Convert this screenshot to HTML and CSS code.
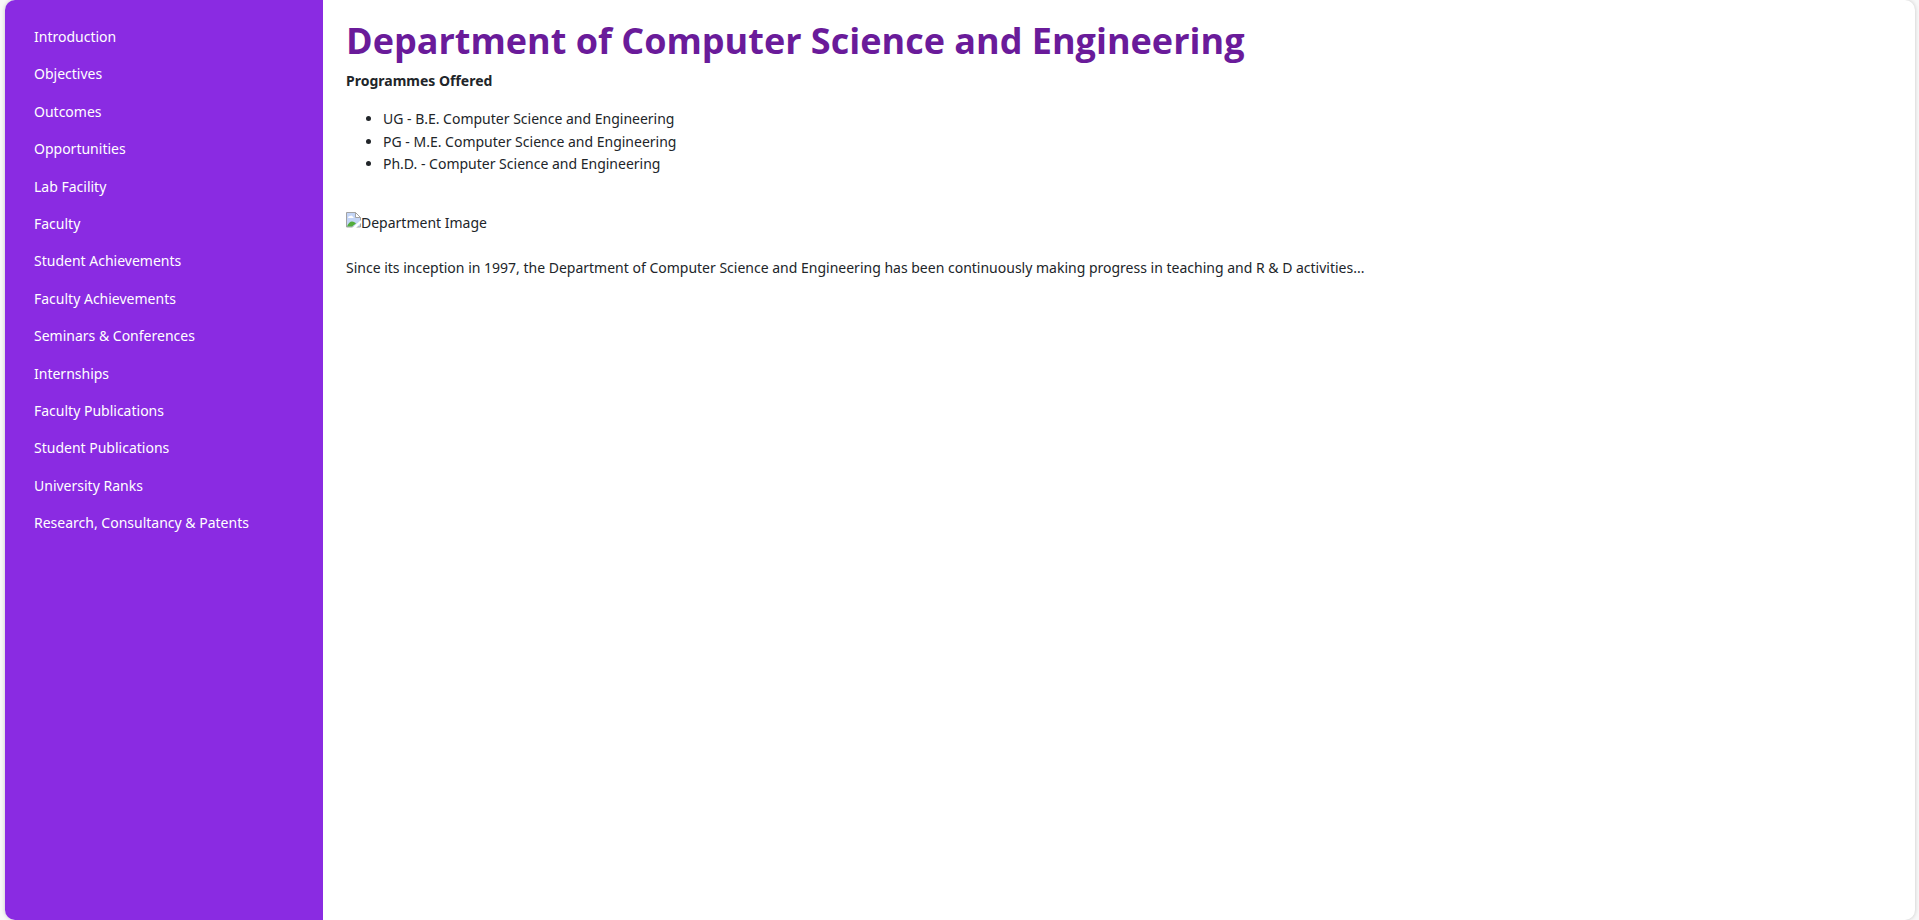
FILE: index.html
```html
<!DOCTYPE html>
<html lang="en">
<head>
<meta charset="utf-8">
<title>Department of Computer Science and Engineering</title>
<link rel="stylesheet" href="styles.css">
</head>
<body>
<div class="panel">
<nav class="sidebar" aria-label="Department">
<a href="#introduction">Introduction</a>
<a href="#objectives">Objectives</a>
<a href="#outcomes">Outcomes</a>
<a href="#opportunities">Opportunities</a>
<a href="#lab">Lab Facility</a>
<a href="#faculty">Faculty</a>
<a href="#student-achievements">Student Achievements</a>
<a href="#faculty-achievements">Faculty Achievements</a>
<a href="#seminars">Seminars &amp; Conferences</a>
<a href="#internships">Internships</a>
<a href="#faculty-publications">Faculty Publications</a>
<a href="#student-publications">Student Publications</a>
<a href="#ranks">University Ranks</a>
<a href="#research">Research, Consultancy &amp; Patents</a>
</nav>
<main class="content">
<h1 class="title">Department of Computer Science and Engineering</h1>
<h2 class="subtitle">Programmes Offered</h2>
<ul class="programmes">
<li>UG - B.E. Computer Science and Engineering</li>
<li>PG - M.E. Computer Science and Engineering</li>
<li>Ph.D. - Computer Science and Engineering</li>
</ul>
<div class="figure">
<svg width="15" height="16" viewBox="0 0 15 16" aria-hidden="true">
<path d="M.5.500h9l5 5v9.500H.5z" fill="#c3d5f7" stroke="#a3a3a3"/>
<path d="M2 6a2 2 0 0 1 2-2 2 2 0 0 1 3 1l1 1z" fill="#fff"/>
<path d="M1 14.500c1-3 3-5 5-5s3 1 4 2l-4 3z" fill="#53ad3c"/>
<path d="M6 16l9-8v3l-5 5z" fill="#fff"/>
<path d="M9.500.500v5h5z" fill="#fff" stroke="#a3a3a3"/>
</svg><span>Department Image</span>
</div>
<p class="intro">Since its inception in 1997, the Department of Computer Science and Engineering has been continuously making progress in teaching and R &amp; D activities...</p>
</main>
</div>
</body>
</html>
```
FILE: styles.css
```css
* { box-sizing: border-box; }
body {
  margin: 0;
  background: #f8f8f8;
  color: #212529;
  font: 14px/1.6 "Noto Sans", "Open Sans", sans-serif;
}
.panel {
  display: flex;
  min-height: 100vh;
  margin: 0 4px 0 5px;
  background: #fff;
  border-radius: 10px;
  overflow: hidden;
  box-shadow: 0 0 4px rgba(0, 0, 0, .2);
}
.sidebar { flex: 0 0 318px; padding: 19px 14px; background: #8a2be2; }
.sidebar a { display: block; padding: 7px 15px 8px; color: #fff; text-decoration: none; }
.content { flex: 1; padding: 17px 23px; }
.title { margin: 0; color: #6a1b9a; font-family: "Open Sans", "Noto Sans", sans-serif; font-size: 36px; line-height: 48px; }
.subtitle { margin: 5px 0 16px; font-size: 14px; }
.programmes { margin: 0 0 36px; padding-left: 37px; }
.figure { display: flex; align-items: flex-start; margin-bottom: 23px; }
.intro { margin: 0; }
```
